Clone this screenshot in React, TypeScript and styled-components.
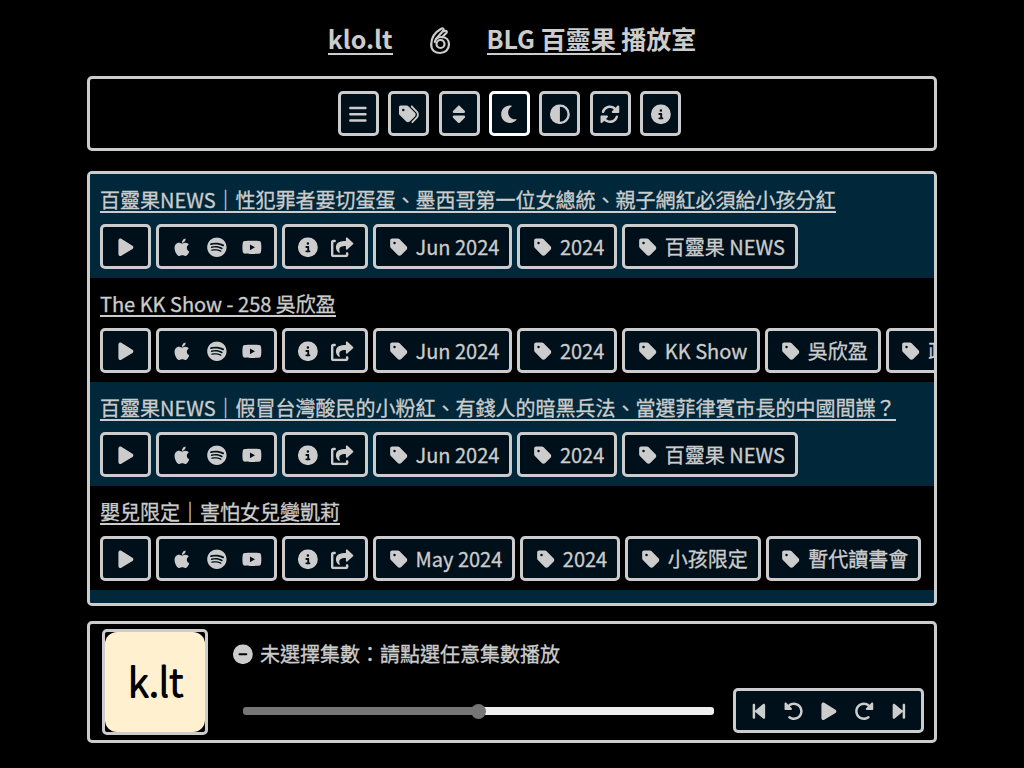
import React from 'react';
import styled, { createGlobalStyle } from 'styled-components';
import {
  FaBars, FaTags, FaSort, FaCircleHalfStroke, FaCircleInfo, FaPlay, FaApple,
  FaSpotify, FaYoutube, FaTag, FaBackwardStep, FaForwardStep,
} from 'react-icons/fa6';

const Global = createGlobalStyle`
  *, *::before, *::after { box-sizing: border-box; }
  html, body { margin: 0; background: #000; }
  body {
    color: #ccc;
    font: 20px/30px "Noto Sans CJK TC", "Noto Sans", sans-serif;
    -webkit-text-stroke: 0.3px currentColor;
  }
`;

const Page = styled.div`
  width: 850px;
  height: 768px;
  margin: 0 auto;
  display: flex;
  flex-direction: column;
  overflow: hidden;
`;

const Header = styled.h1`
  display: flex;
  justify-content: center;
  align-items: center;
  height: 76px;
  margin: 0;
  padding-top: 3px;
  font-size: 25px;
  font-weight: 700;
  line-height: 34px;
  white-space: pre;
  -webkit-text-stroke: 0;
`;

const Underlined = styled.span`
  display: inline-block;
  height: 31px;
  line-height: 29px;
  border-bottom: 2px solid #ccc;
`;

const HeaderTail = styled.span`
  height: 31px;
  line-height: 29px;
`;

const HandIcon = styled.svg`
  width: 22px;
  height: 28px;
  margin: 2px 36px 0 36px;
`;

const Panel = styled.section`
  border: 3px solid #ccc;
  border-radius: 5px;
  background: #000;
`;

const Toolbar = styled(Panel)`
  display: flex;
  justify-content: center;
  align-items: center;
  gap: 9.4px;
  height: 75px;
  padding-right: 5px;
`;

const Button = styled.button<{ $active?: boolean; $pad?: number }>`
  display: flex;
  flex: none;
  align-items: center;
  gap: 10px;
  height: 45px;
  margin: 0;
  padding: 1px ${(p) => p.$pad ?? 10}px 0;
  border: 3px solid ${(p) => (p.$active ? '#fff' : '#ccc')};
  border-radius: 5px;
  background: #00101a;
  color: #ccc;
  font: inherit;
  -webkit-text-stroke: inherit;
  white-space: nowrap;
`;

const TagButton = styled(Button)`
  gap: 4.5px;
`;

const Glyph = styled.span`
  display: flex;
  flex: none;
  justify-content: center;
  width: 25px;

  svg {
    display: block;
    flex: none;
    width: auto;
    height: 20px;
    transform: translate(-0.1px, 0.3px);
  }
`;

const List = styled(Panel)`
  height: 435px;
  margin-top: 20px;
  overflow: hidden;
`;

const Row = styled.article`
  height: 104px;
  padding: 10px 10px 0;
  overflow: hidden;

  &:nth-child(odd) { background: #00283a; }
`;

const Title = styled.div`
  display: flex;
  height: 40px;
`;

const TitleLink = styled.span`
  height: 29px;
  line-height: 32px;
  border-bottom: 2px solid #ccc;
  white-space: nowrap;
`;

const Actions = styled.div`
  display: flex;
  gap: 5px;
`;

const Player = styled(Panel)`
  display: flex;
  height: 122px;
  margin-top: 15px;
  padding: 5px 10px 0 12px;
`;

const Cover = styled.div`
  flex: none;
  width: 106px;
  height: 106px;
  border: 3px solid #ccc;
  border-radius: 5px;
`;

const PlayerBody = styled.div`
  flex: 1;
  display: flex;
  flex-direction: column;
  justify-content: space-between;
  height: 104px;
  padding-left: 22px;
`;

const Status = styled.div`
  display: flex;
  align-items: center;
  gap: 5px;
  height: 40px;
  padding-top: 10px;
`;

const Controls = styled.div`
  display: flex;
  align-items: center;
  gap: 19px;
`;

const Slider = styled.div`
  flex: 1;
  display: flex;
  align-items: center;
  height: 16px;
  margin-left: 13px;
  padding-top: 1px;
`;

const Track = styled.div<{ $side: 'played' | 'rest' }>`
  flex: 1;
  height: 8px;
  background: ${(p) => (p.$side === 'played' ? '#767676' : '#efefef')};
  border-radius: ${(p) => (p.$side === 'played' ? '3px 0 0 3px' : '0 3px 3px 0')};
`;

const Thumb = styled.div`
  width: 15px;
  height: 15px;
  margin: 0 -7px;
  z-index: 1;
  border-radius: 50%;
  background: #767676;
`;

type Shape = React.ComponentType;

const icon = (width: number, d: string, flip = false): Shape => () => (
  <svg viewBox={`0 0 ${width} 512`} fill="currentColor" fillRule="evenodd">
    <path d={d} transform={flip ? `translate(${width} 0) scale(-1 1)` : undefined} />
  </svg>
);

const Moon = icon(512, 'M32 256c0-123.8 100.3-224 223.8-224c11.36 0 29.7 1.668 40.9 3.746c9.616 1.777 11.75 14.63 3.279 19.44C245 86.5 211.2 144.6 211.2 207.8c0 109.7 99.71 193 208.3 172.3c9.561-1.805 16.28 9.324 10.11 16.95C387.9 448.6 324.8 480 255.8 480C132.1 480 32 379.6 32 256z');
const Rotate = icon(512, 'M449.9 39.96l-48.5 48.53C362.5 53.19 311.4 32 256 32C161.5 32 78.59 92.34 49.58 182.2c-5.438 16.81 3.797 34.88 20.61 40.28c16.97 5.5 34.86-3.812 40.3-20.59C130.9 138.5 189.4 96 256 96c37.96 0 73 14.18 100.2 37.8L311.1 178C295.1 194.8 306.8 223.4 330.4 224h146.9C487.7 223.7 496 215.3 496 204.9V59.04C496 34.99 466.9 22.95 449.9 39.96zM441.8 289.6c-16.94-5.438-34.88 3.812-40.3 20.59C381.1 373.5 322.6 416 256 416c-37.96 0-73-14.18-100.2-37.8L200 334C216.9 317.2 205.2 288.6 181.6 288H34.66C24.32 288.3 16 296.7 16 307.1v145.9c0 24.04 29.07 36.08 46.07 19.07l48.5-48.53C149.5 458.8 200.6 480 255.1 480c94.45 0 177.4-60.34 206.4-150.2C467.9 313 458.6 294.1 441.8 289.6z');
const UNDO = 'M480 256c0 123.4-100.5 223.9-223.9 223.9c-48.84 0-95.17-15.58-134.2-44.86c-14.12-10.59-16.97-30.66-6.375-44.81c10.59-14.12 30.62-16.94 44.81-6.375c27.84 20.91 61 31.94 95.88 31.94C344.3 415.8 416 344.1 416 256s-71.69-159.8-159.8-159.8c-37.46 0-73.09 13.49-101.3 36.64l45.12 45.14c17.01 17.02 4.955 46.1-19.1 46.1H35.17C24.58 224.1 16 215.5 16 204.9V59.04c0-24.04 29.07-36.08 46.07-19.07l47.6 47.63C149.9 52.71 201.5 32.11 256.1 32.11C379.5 32.11 480 132.6 480 256z';
const RotateLeft = icon(512, UNDO);
const RotateRight = icon(512, UNDO, true);
const Share = icon(576, 'M568.9 143.5l-150.9-138.2C404.8-6.773 384 3.039 384 21.84V96C241.2 97.63 128 126.1 128 260.6c0 54.3 35.2 108.1 74.08 136.2c12.14 8.781 29.42-2.238 24.94-16.46C186.7 252.2 256 224 384 223.1v74.2c0 18.82 20.84 28.59 34.02 16.51l150.9-138.2C578.4 167.8 578.4 152.2 568.9 143.5zM416 384c-17.67 0-32 14.33-32 32v31.1l-320-.0013V128h32c17.67 0 32-14.32 32-32S113.7 64 96 64H64C28.65 64 0 92.65 0 128v319.1c0 35.34 28.65 64 64 64h320c35.34 0 64-28.66 64-64v-32C448 398.3 433.7 384 416 384z');
const CircleMinus = icon(512, 'M256 0a256 256 0 1 0 0 512a256 256 0 1 0 0-512zM168 232h176a24 24 0 0 1 0 48H168a24 24 0 0 1 0-48z');

const Icon = ({ of: Drawing }: { of: Shape }) => (
  <Glyph><Drawing /></Glyph>
);

const tools: Shape[] = [FaBars, FaTags, FaSort, Moon, FaCircleHalfStroke, Rotate, FaCircleInfo];
const playback: Shape[] = [FaBackwardStep, RotateLeft, FaPlay, RotateRight, FaForwardStep];

const episodes = [
  { title: '百靈果NEWS｜性犯罪者要切蛋蛋、墨西哥第一位女總統、親子網紅必須給小孩分紅', tags: ['Jun 2024', '2024', '百靈果 NEWS'] },
  { title: 'The KK Show - 258 吳欣盈', tags: ['Jun 2024', '2024', 'KK Show', '吳欣盈', '政治'] },
  { title: '百靈果NEWS｜假冒台灣酸民的小粉紅、有錢人的暗黑兵法、當選菲律賓市長的中國間諜？', tags: ['Jun 2024', '2024', '百靈果 NEWS'] },
  { title: '嬰兒限定｜害怕女兒變凱莉', tags: ['May 2024', '2024', '小孩限定', '暫代讀書會'] },
];

export default function App() {
  return (
    <>
      <Global />
      <Page>
        <Header>
          <Underlined>klo.lt</Underlined>
          <HandIcon viewBox="0 0 22 28" fill="none" stroke="#ccc" strokeWidth="2.2" strokeLinecap="round" strokeLinejoin="round">
            <circle cx="11.5" cy="17" r="4" />
            <path d="M2.2 17.5C2.2 23 6 26 11.2 26S20 22.3 20 17.3C20 13 17 10 12.5 10 9 10 6.5 12 5.8 15" />
            <path d="M2.2 17.5C2.2 10 6.5 5 12.2 1.8c1.8-1 3 .4 2 2L7 12M14.6 4.4c2.2-1.4 3.8-.2 2.8 1.6L13 10.2" />
          </HandIcon>
          <Underlined>BLG 百靈果 </Underlined>
          <HeaderTail>播放室</HeaderTail>
        </Header>
        <Toolbar>
          {tools.map((t, i) => (
            <Button key={i} $pad={5} $active={t === Moon}><Icon of={t} /></Button>
          ))}
        </Toolbar>
        <List>
          {episodes.map((e) => (
            <Row key={e.title}>
              <Title><TitleLink>{e.title}</TitleLink></Title>
              <Actions>
                <Button><Icon of={FaPlay} /></Button>
                <Button><Icon of={FaApple} /><Icon of={FaSpotify} /><Icon of={FaYoutube} /></Button>
                <Button><Icon of={FaCircleInfo} /><Icon of={Share} /></Button>
                {e.tags.map((tag) => (
                  <TagButton key={tag}><Icon of={FaTag} />{tag}</TagButton>
                ))}
              </Actions>
            </Row>
          ))}
          <Row />
        </List>
        <Player>
          <Cover>
            <svg width="100" height="100" viewBox="0 0 100 100">
              <rect width="100" height="100" rx="12" fill="#fff0cf" />
              <text x="50.5" y="65" textAnchor="middle" fontFamily="Noto Sans CJK TC, sans-serif" fontWeight="300" fontSize="39" fill="#000" stroke="#000" strokeWidth="1.8" strokeLinejoin="round">k.lt</text>
            </svg>
          </Cover>
          <PlayerBody>
            <Status><Icon of={CircleMinus} />未選擇集數：請點選任意集數播放</Status>
            <Controls>
              <Slider><Track $side="played" /><Thumb /><Track $side="rest" /></Slider>
              <Button>{playback.map((p, i) => <Icon key={i} of={p} />)}</Button>
            </Controls>
          </PlayerBody>
        </Player>
      </Page>
    </>
  );
}
